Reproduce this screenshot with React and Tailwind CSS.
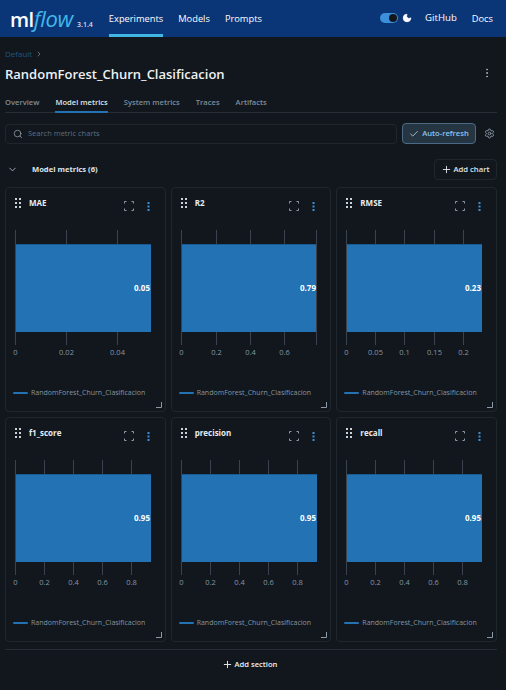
import React from "react";
import { ChevronDown, Check, Plus, Settings, Search, EllipsisVertical, Moon, ChevronRight } from "lucide-react";

const series = "RandomForest_Churn_Clasificacion";
const charts = [
  { title: "MAE", value: "0.05", ticks: [[10, "0"], [61, "0.02"], [112, "0.04"]] },
  { title: "R2", value: "0.79", ticks: [[10, "0"], [45, "0.2"], [79, "0.4"], [113, "0.6"]], edge: true },
  { title: "RMSE", value: "0.23", ticks: [[10, "0"], [39, "0.05"], [68, "0.1"], [98, "0.15"], [127, "0.2"]] },
  { title: "f1_score", value: "0.95", ticks: [[10, "0"], [39, "0.2"], [68, "0.4"], [97, "0.6"], [126, "0.8"]] },
  { title: "precision", value: "0.95", ticks: [[10, "0"], [39, "0.2"], [68, "0.4"], [97, "0.6"], [126, "0.8"]] },
  { title: "recall", value: "0.95", ticks: [[10, "0"], [39, "0.2"], [68, "0.4"], [97, "0.6"], [126, "0.8"]] },
];

function Grip() {
  return (
    <svg width="6" height="10" viewBox="0 0 6 10" className="shrink-0">
      {[0, 4, 8].map((y) => (
        <g key={y} fill="#c9d1d9">
          <rect x="0" y={y} width="2" height="2" />
          <rect x="4" y={y} width="2" height="2" />
        </g>
      ))}
    </svg>
  );
}

function Corners() {
  return (
    <svg width="10" height="10" viewBox="0 0 10 10" fill="none" stroke="#8d99a6" strokeWidth="1">
      <path d="M.5 2.5v-2h2M7.5.5h2v2M9.5 7.5v2h-2M2.5 9.5h-2v-2" />
    </svg>
  );
}

function Dots() {
  return (
    <svg width="3" height="9" viewBox="0 0 3 9" fill="#3b8fd9">
      <rect x="0.5" y="0" width="2" height="2" />
      <rect x="0.5" y="3.5" width="2" height="2" />
      <rect x="0.5" y="7" width="2" height="2" />
    </svg>
  );
}

function Plot({ c }) {
  return (
    <svg width="159" height="130" viewBox="0 0 159 130" className="block" style={{ fontFamily: "'Open Sans', sans-serif" }}>
      {c.ticks.map(([x, label]) => (
        <g key={label}>
          <line x1={x - 0.5} x2={x - 0.5} y1="0" y2="115" stroke="#3a434d" />
          <text x={x - 0.5} y="125" textAnchor="middle" fontSize="7.5" fill="#8496a6">{label}</text>
        </g>
      ))}
      <rect x="10" y="14" width="135" height="88" fill="#2272b4" />
      <rect x="10" y="14" width="135" height="1" fill="#1a5a92" />
      {c.edge && <line x1="144.5" x2="144.5" y1="0" y2="115" stroke="#3a434d" />}
      <text x="144" y="60.5" textAnchor="end" fontSize="8" fontWeight="700" fill="#ffffff">{c.value}</text>
    </svg>
  );
}

function Card({ c }) {
  return (
    <div className="relative h-[225px] rounded-[4px] border border-[#1f272d] bg-[#11171c]">
      <div className="flex h-[38px] items-start pl-[9px] pr-[15px] pt-[10px]">
        <Grip />
        <span className="ml-[8px] text-[8px] font-bold leading-[10px] text-[#e8ecf0]">{c.title}</span>
        <div className="ml-auto flex items-center gap-[13px] pt-[3px]">
          <Corners />
          <Dots />
        </div>
      </div>
      <div className="mt-[4px]">
        <Plot c={c} />
      </div>
      <div className="mt-[27px] flex items-center pl-[7px]">
        <span className="h-[2px] w-[15px] rounded-[1px] bg-[#2272b4]" />
        <span className="ml-[3px] text-[7px] leading-[12px] text-[#8496a6]">{series}</span>
      </div>
      <svg width="6" height="6" viewBox="0 0 6 6" className="absolute bottom-[3px] right-[3px]" fill="none" stroke="#8d99a6">
        <path d="M5.5 0v5.5H0" />
      </svg>
    </div>
  );
}

export default function App() {
  return (
    <div className="h-[690px] w-[506px] overflow-hidden bg-[#11171c] text-[#e8ecf0]" style={{ fontFamily: "'Open Sans', 'Noto Sans', sans-serif" }}>
      <header className="flex h-[37px] items-center bg-[#0a3678] pl-[10px] pr-[13px]">
        <div className="flex items-baseline">
          <span className="text-[20px] font-semibold leading-none tracking-[-0.5px] text-white">ml</span>
          <span className="text-[22px] italic leading-none tracking-[-0.3px] text-[#43b6e8]">flow</span>
          <span className="ml-[4px] text-[7px] font-semibold text-[#d5dde6]">3.1.4</span>
        </div>
        <nav className="ml-[16px] flex h-full items-center gap-[15px] text-[9.3px] text-white">
          <span className="flex h-full items-center border-b-[3px] border-[#43b6e8] pt-[3px]">Experiments</span>
          <span>Models</span>
          <span>Prompts</span>
        </nav>
        <div className="ml-auto flex items-center">
          <span className="flex h-[10px] w-[18px] items-center justify-end rounded-full bg-[#3c8fdb] pr-[1px]">
            <span className="h-[8px] w-[8px] rounded-full bg-[#11171c]" />
          </span>
          <Moon size={10} className="ml-[4px] fill-white text-white" />
          <span className="ml-[13px] text-[9.6px] text-white">GitHub</span>
          <span className="ml-[15px] text-[9.3px] text-white">Docs</span>
        </div>
      </header>

      <main className="pl-[5px] pr-[9px]">
        <div className="mt-[11px] flex h-[12px] items-center text-[8px] text-[#1f5489]">
          <span>Default</span>
          <ChevronRight size={8} className="ml-[3px] text-[#8d99a6]" />
        </div>
        <div className="mt-[4px] flex items-center justify-between">
          <h1 className="text-[13px] font-semibold leading-[20px] text-[#edf1f5]">RandomForest_Churn_Clasificacion</h1>
          <EllipsisVertical size={12} color="#aab4be" className="mr-[4px] mb-[2px]" />
        </div>
        <div className="mt-[11px] flex h-[18px] items-start gap-[16px] border-b border-[#252d35] pt-[2px] text-[7.6px] font-semibold text-[#7d8c9b]">
          <span>Overview</span>
          <span className="h-[16px] border-b-2 border-[#2272b4] text-[#dfe5ea]">Model metrics</span>
          <span>System metrics</span>
          <span>Traces</span>
          <span>Artifacts</span>
        </div>

        <div className="mt-[10px] flex items-center">
          <div className="flex h-[20px] flex-1 items-center rounded-[4px] border border-[#1f272d] pl-[7px]">
            <Search size={10} color="#8d99a6" />
            <span className="ml-[5px] text-[7.5px] text-[#5f6f80]">Search metric charts</span>
          </div>
          <div className="ml-[5px] flex h-[21px] w-[74px] items-center justify-center rounded-[4px] border border-[#4a6a85] bg-[#253542] text-[7.6px] font-semibold text-[#8fc4ee]">
            <Check size={10} color="#c4d2de" className="mr-[3px]" />
            Auto-refresh
          </div>
          <Settings size={11} color="#8d99a6" className="ml-[8px] mr-[2px]" />
        </div>

        <div className="mt-[15px] flex h-[21px] items-center">
          <ChevronDown size={11} color="#aab4be" className="ml-[2px]" />
          <span className="ml-[14px] text-[7.6px] font-bold text-[#dfe5ea]">Model metrics (6)</span>
          <div className="ml-auto flex h-[21px] w-[63px] items-center justify-center rounded-[4px] border border-[#1f272d] text-[7.7px] font-semibold text-[#dfe5ea]">
            <Plus size={11} className="mr-[1px]" />
            Add chart
          </div>
        </div>

        <div className="mt-[7px] grid grid-cols-3 gap-x-[5px] gap-y-[5px]">
          {charts.map((c) => (
            <Card key={c.title} c={c} />
          ))}
        </div>

        <div className="mt-[7px] border-t border-[#252d35]" />
        <div className="mt-[9px] flex items-center justify-center pr-[3px] text-[7.6px] font-semibold text-[#edf1f5]">
          <Plus size={11} className="mr-[2px]" />
          Add section
        </div>
      </main>
    </div>
  );
}
